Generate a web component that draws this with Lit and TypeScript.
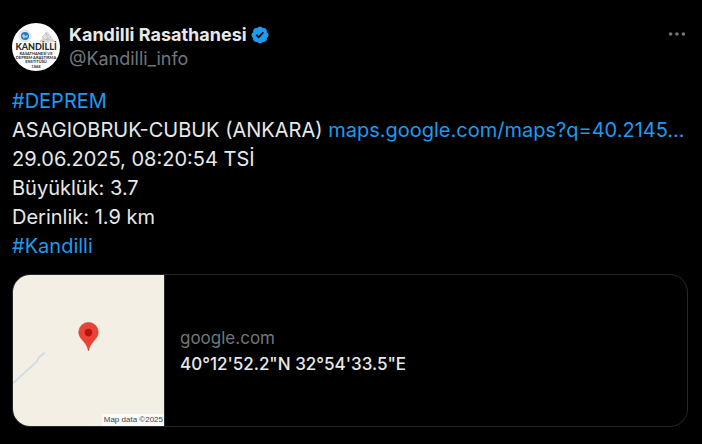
import { LitElement, html, css } from "lit";
import { customElement } from "lit/decorators.js";

@customElement("post-avatar")
class PostAvatar extends LitElement {
  static styles = css`
    :host { display: block; flex: none; }
    svg { display: block; width: 48px; height: 48px; }
    text { font-family: "Lato", "Liberation Sans", sans-serif; fill: #2b2b2b; text-anchor: middle; }
    .name { font-size: 9px; font-weight: 900; }
    .line { font-size: 4px; font-weight: 700; }
  `;
  render() {
    return html`
      <svg viewBox="0 0 48 48" role="img" aria-label="Kandilli Rasathanesi">
        <circle cx="24" cy="24" r="24" fill="#fefefe" />
        <circle cx="13" cy="13" r="6" fill="#e6ebee" stroke="#ccd5da" stroke-dasharray="1 1" />
        <circle cx="13" cy="13" r="4" fill="#2779b5" />
        <path d="M10 12.500l2-1.500 1 2 3-1-1 3-2-1-1 2z" fill="#a9d5ef" />
        <path d="M27 18.500c3-1 4-6 8-10.500 4 4 5 9 9 10.500-5 1.500-12 1.500-17 0z" fill="#e1e2e2" />
        <path d="M30 14l4-4 5 4-5 3zM28 18c5-2 10-2 14 0M34 9l2 9" fill="none" stroke="#b9bcbe" stroke-width=".7" />
        <text class="name" x="24" y="27">KANDİLLİ</text>
        <text class="line" x="24" y="32">RASATHANESİ VE</text>
        <text class="line" x="24" y="36">DEPREM ARAŞTIRMA</text>
        <text class="line" x="24" y="40">ENSTİTÜSÜ</text>
        <text class="line" x="24" y="45">1868</text>
      </svg>
    `;
  }
}

@customElement("map-preview")
class MapPreview extends LitElement {
  static styles = css`
    :host { display: block; flex: none; position: relative; width: 152px; background: #f4efe5; border-right: 1px solid #26292b; box-sizing: border-box; }
    svg { display: block; width: 100%; }
    .credit { position: absolute; right: 0; bottom: 0; padding: 0 1px 0 2px; background: #fafafa; color: #444; font: 8px/12px "Liberation Sans", sans-serif; }
  `;
  render() {
    return html`
      <svg viewBox="0 0 152 152" role="img" aria-label="Map with a pin">
        <path d="M0 109L24 87 26 83 32 78" fill="none" stroke="#d2dce4" stroke-width="2" />
        <path d="M76 76.500C74.500 67 66.200 65 66.200 57.500a9.800 9.800 0 0 1 19.600 0C85.800 65 77.500 67 76 76.500z" fill="#ea4335" stroke="#c5372c" stroke-width=".6" />
        <circle cx="76" cy="58" r="3.800" fill="#b31412" />
      </svg>
      <span class="credit">Map data ©2025</span>
    `;
  }
}

@customElement("app-root")
class AppRoot extends LitElement {
  static styles = css`
    :host { display: block; min-height: 100vh; box-sizing: border-box; padding: 23px 14px 16px 12px; background: #000; color: #e7e9ea; font-family: "Inter", "Noto Sans", sans-serif; }
    a { color: inherit; text-decoration: none; }
    header { display: flex; gap: 9px; align-items: flex-start; }
    .author { flex: 1; min-width: 0; font-size: 18px; line-height: 24px; }
    .title { display: flex; align-items: center; gap: 3px; }
    .name { font-weight: 700; }
    .handle { color: #71767b; }
    .badge { width: 20px; height: 20px; flex: none; }
    .more { display: flex; align-items: center; padding: 0; border: 0; background: none; color: #71767b; cursor: pointer; }
    .more svg { width: 22px; height: 22px; }
    .body { margin: 16px 0 13px; font-size: 20px; line-height: 29px; }
    .body a { color: #1d9bf0; }
    .card { display: flex; align-items: center; border: 1px solid #26292b; border-radius: 18px; overflow: hidden; }
    .details { padding: 0 15px; font-size: 17px; line-height: 26px; }
    .domain { color: #71767b; }
    .place { font-weight: 500; }
  `;
  render() {
    return html`
      <article>
        <header>
          <post-avatar></post-avatar>
          <div class="author">
            <div class="title">
              <a class="name" href="#profile">Kandilli Rasathanesi</a>
              <svg class="badge" viewBox="0 0 22 22" role="img" aria-label="Verified account">
                <path fill="#1d9bf0" d="M20.396 11c-.018-.646-.215-1.275-.57-1.816-.354-.54-.852-.972-1.438-1.246.223-.607.27-1.264.14-1.897-.131-.634-.437-1.218-.882-1.687-.47-.445-1.053-.75-1.687-.882-.633-.13-1.290-.083-1.897.14-.273-.587-.704-1.086-1.245-1.440S11.647 1.620 11 1.604c-.646.017-1.273.213-1.813.568s-.969.854-1.240 1.440c-.608-.223-1.267-.272-1.902-.14-.635.130-1.220.436-1.690.882-.445.470-.749 1.055-.878 1.688-.130.633-.080 1.290.144 1.896-.587.274-1.087.705-1.443 1.245-.356.540-.555 1.170-.574 1.817.020.647.218 1.276.574 1.817.356.540.856.972 1.443 1.245-.224.606-.274 1.263-.144 1.896.130.634.433 1.218.877 1.688.470.443 1.054.747 1.687.878.633.132 1.290.084 1.897-.136.274.586.705 1.084 1.246 1.439.540.354 1.170.551 1.816.569.647-.016 1.276-.213 1.817-.567s.972-.854 1.245-1.440c.604.239 1.266.296 1.903.164.636-.132 1.220-.447 1.680-.907.460-.460.776-1.044.908-1.681s.075-1.299-.165-1.903c.586-.274 1.084-.705 1.439-1.246.354-.540.551-1.170.569-1.816z" />
                <path fill="#000" d="M9.662 14.850l-3.429-3.428 1.293-1.302 2.072 2.072 4.400-4.794 1.347 1.246z" />
              </svg>
            </div>
            <div class="handle">@Kandilli_info</div>
          </div>
          <button class="more" aria-label="More">
            <svg viewBox="0 0 24 24"><path fill="currentColor" d="M3 12a2 2 0 1 1 4 0 2 2 0 0 1-4 0zm7 0a2 2 0 1 1 4 0 2 2 0 0 1-4 0zm7 0a2 2 0 1 1 4 0 2 2 0 0 1-4 0z" /></svg>
          </button>
        </header>
        <div class="body">
          <a href="#deprem">#DEPREM</a><br />
          ASAGIOBRUK-CUBUK (ANKARA) <a href="#map">maps.google.com/maps?q=40.2145…</a><br />
          29.06.2025, 08:20:54 TSİ<br />
          Büyüklük: 3.7<br />
          Derinlik: 1.9 km<br />
          <a href="#kandilli">#Kandilli</a>
        </div>
        <a class="card" href="#map">
          <map-preview></map-preview>
          <div class="details">
            <div class="domain">google.com</div>
            <div class="place">40°12'52.2"N 32°54'33.5"E</div>
          </div>
        </a>
      </article>
    `;
  }
}
